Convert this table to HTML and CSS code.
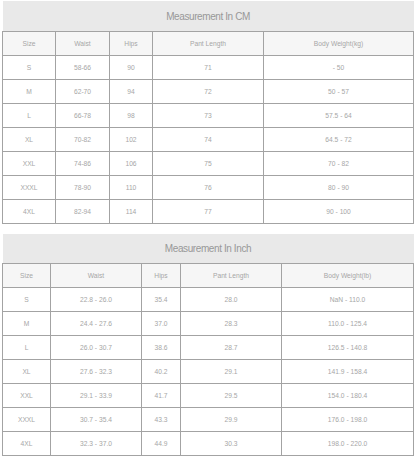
FILE: index.html
```html
<!DOCTYPE html>
<html>
<head>
<meta charset="utf-8">
<link rel="stylesheet" href="styles.css">
</head>
<body>
<div class="page">
  <table class="size-table cm">
    <colgroup><col class="c1"><col class="c2"><col class="c3"><col class="c4"><col class="c5"></colgroup>
    <tr class="title-row"><td colspan="5">Measurement In CM</td></tr>
    <tr class="head-row"><td>Size</td><td>Waist</td><td>Hips</td><td>Pant Length</td><td>Body Weight(kg)</td></tr>
    <tr><td>S</td><td>58-66</td><td>90</td><td>71</td><td>- 50</td></tr>
    <tr><td>M</td><td>62-70</td><td>94</td><td>72</td><td>50 - 57</td></tr>
    <tr><td>L</td><td>66-78</td><td>98</td><td>73</td><td>57.5 - 64</td></tr>
    <tr><td>XL</td><td>70-82</td><td>102</td><td>74</td><td>64.5 - 72</td></tr>
    <tr><td>XXL</td><td>74-86</td><td>106</td><td>75</td><td>70 - 82</td></tr>
    <tr><td>XXXL</td><td>78-90</td><td>110</td><td>76</td><td>80 - 90</td></tr>
    <tr><td>4XL</td><td>82-94</td><td>114</td><td>77</td><td>90 - 100</td></tr>
  </table>
  <table class="size-table inch">
    <colgroup><col class="c1"><col class="c2"><col class="c3"><col class="c4"><col class="c5"></colgroup>
    <tr class="title-row"><td colspan="5">Measurement In Inch</td></tr>
    <tr class="head-row"><td>Size</td><td>Waist</td><td>Hips</td><td>Pant Length</td><td>Body Weight(lb)</td></tr>
    <tr><td>S</td><td>22.8 - 26.0</td><td>35.4</td><td>28.0</td><td>NaN - 110.0</td></tr>
    <tr><td>M</td><td>24.4 - 27.6</td><td>37.0</td><td>28.3</td><td>110.0 - 125.4</td></tr>
    <tr><td>L</td><td>26.0 - 30.7</td><td>38.6</td><td>28.7</td><td>126.5 - 140.8</td></tr>
    <tr><td>XL</td><td>27.6 - 32.3</td><td>40.2</td><td>29.1</td><td>141.9 - 158.4</td></tr>
    <tr><td>XXL</td><td>29.1 - 33.9</td><td>41.7</td><td>29.5</td><td>154.0 - 180.4</td></tr>
    <tr><td>XXXL</td><td>30.7 - 35.4</td><td>43.3</td><td>29.9</td><td>176.0 - 198.0</td></tr>
    <tr><td>4XL</td><td>32.3 - 37.0</td><td>44.9</td><td>30.3</td><td>198.0 - 220.0</td></tr>
  </table>
</div>
</body>
</html>
```
FILE: styles.css
```css
html, body {
  margin: 0;
  padding: 0;
  background: #ffffff;
}
.page {
  display: flex;
  flex-direction: column;
  gap: 10px;
  padding: 1px 0 0 2px;
}
.size-table {
  width: 411px;
  border-collapse: collapse;
  table-layout: fixed;
  font-family: "Liberation Sans", Arial, sans-serif;
  color: #a6a6a6;
  font-size: 6.7px;
}
.size-table td {
  border: 1px solid #a3a3a3;
  text-align: center;
  padding: 0;
  height: 23px;
}
.size-table .title-row td {
  border: none;
  border-bottom: 1px solid #a3a3a3;
  background: #e9e9e9;
  color: #989898;
  font-size: 10px;
  letter-spacing: -0.4px;
  height: 30px;
}
.size-table.inch .title-row td {
  height: 29px;
}
.size-table .head-row td {
  background: #f6f6f6;
}
.cm .c1 { width: 53px; }
.cm .c2 { width: 54px; }
.cm .c3 { width: 43px; }
.cm .c4 { width: 111px; }
.cm .c5 { width: 150px; }
.inch .c1 { width: 48px; }
.inch .c2 { width: 91px; }
.inch .c3 { width: 39px; }
.inch .c4 { width: 101px; }
.inch .c5 { width: 132px; }
```
